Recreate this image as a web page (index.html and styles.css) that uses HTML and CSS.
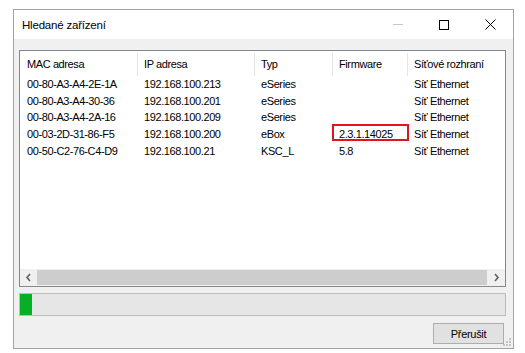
FILE: index.html
```html
<!DOCTYPE html>
<html lang="cs">
<head>
  <meta charset="UTF-8">
  <title>Hledané zařízení</title>
  <link rel="stylesheet" href="styles.css">
</head>
<body>
  <div class="window">
    <!-- Title bar -->
    <div class="titlebar">
      <span class="title">Hledané zařízení</span>
      <div class="controls">
        <span class="ctl ctl-min"><i class="min-line"></i></span>
        <span class="ctl ctl-max"><i class="max-box"></i></span>
        <span class="ctl ctl-close">
          <svg width="11" height="11" viewBox="0 0 11 11"><path d="M0.5 0.5 L10.5 10.5 M10.5 0.5 L0.5 10.5" stroke="#000" stroke-width="1" fill="none"/></svg>
        </span>
      </div>
    </div>

    <div class="content">
      <!-- Device list -->
      <div class="list">
        <div class="row head">
          <span>MAC adresa</span>
          <span>IP adresa</span>
          <span>Typ</span>
          <span>Firmware</span>
          <span>Síťové rozhraní</span>
        </div>
        <div class="row">
          <span>00-80-A3-A4-2E-1A</span><span>192.168.100.213</span><span>eSeries</span><span></span><span>Síť Ethernet</span>
        </div>
        <div class="row">
          <span>00-80-A3-A4-30-36</span><span>192.168.100.201</span><span>eSeries</span><span></span><span>Síť Ethernet</span>
        </div>
        <div class="row">
          <span>00-80-A3-A4-2A-16</span><span>192.168.100.209</span><span>eSeries</span><span></span><span>Síť Ethernet</span>
        </div>
        <div class="row">
          <span>00-03-2D-31-86-F5</span><span>192.168.100.200</span><span>eBox</span><span class="marked">2.3.1.14025</span><span>Síť Ethernet</span>
        </div>
        <div class="row">
          <span>00-50-C2-76-C4-D9</span><span>192.168.100.21</span><span>KSC_L</span><span>5.8</span><span>Síť Ethernet</span>
        </div>

        <div class="hscroll">
          <span class="arrow">
            <svg width="7" height="9" viewBox="0 0 7 9"><path d="M5 1 L2 4.5 L5 8" stroke="#606060" stroke-width="1.6" fill="none"/></svg>
          </span>
          <span class="thumb"></span>
          <span class="arrow">
            <svg width="7" height="9" viewBox="0 0 7 9"><path d="M2 1 L5 4.5 L2 8" stroke="#606060" stroke-width="1.6" fill="none"/></svg>
          </span>
        </div>
      </div>

      <!-- Progress -->
      <div class="progress">
        <div class="progress-fill" style="width: 12px"></div>
      </div>

      <div class="buttons">
        <button class="btn">Přerušit</button>
      </div>
    </div>

    <svg class="grip" width="8" height="8" viewBox="0 0 8 8">
      <rect x="6" y="0" width="2" height="2" fill="#c4c4c4"/>
      <rect x="3" y="3" width="2" height="2" fill="#c4c4c4"/>
      <rect x="6" y="3" width="2" height="2" fill="#c4c4c4"/>
      <rect x="0" y="6" width="2" height="2" fill="#c4c4c4"/>
      <rect x="3" y="6" width="2" height="2" fill="#c4c4c4"/>
      <rect x="6" y="6" width="2" height="2" fill="#c4c4c4"/>
    </svg>
  </div>
</body>
</html>
```

FILE: styles.css
```css
/* Basic Styles */
body {
  margin: 0;
  padding: 0;
  background-color: #fff;
  font-family: "Liberation Sans", Arial, sans-serif;
  color: #000;
}

.window {
  position: relative;
  box-sizing: border-box;
  width: 501px;
  height: 340px;
  margin: 9px 0 0 13px;
  border: 1px solid #a3a3a3;
  background-color: #f0f0f0;
  display: flex;
  flex-direction: column;
}

/* Title bar */
.titlebar {
  height: 29px;
  background-color: #fff;
  display: flex;
  align-items: center;
  justify-content: space-between;
}

.title {
  padding-left: 8px;
  padding-top: 1px;
  font-size: 11.5px;
  letter-spacing: -0.2px;
}

.controls {
  display: flex;
  height: 100%;
}

.ctl {
  width: 46px;
  height: 100%;
  display: flex;
  align-items: center;
  justify-content: center;
}

.ctl-min {
  padding-left: 4px;
}

.min-line {
  display: block;
  width: 10px;
  height: 1px;
  background-color: #c6c6c6;
}

.max-box {
  display: block;
  width: 8px;
  height: 8px;
  border: 1px solid #000;
}

/* Content */
.content {
  flex: 1;
  padding: 11px 7px 0 5px;
  display: flex;
  flex-direction: column;
}

.list {
  box-sizing: border-box;
  height: 237px;
  border: 1px solid #828790;
  background-color: #fff;
  display: flex;
  flex-direction: column;
  font-size: 11px;
  letter-spacing: -0.4px;
}

.row {
  display: grid;
  grid-template-columns: 117px 117px 78px 75px 1fr;
  height: 16.7px;
  line-height: 16.7px;
  white-space: nowrap;
}

.row span {
  padding-left: 7px;
  position: relative;
}

.row.head {
  height: 25px;
  line-height: 23px;
  padding-top: 2px;
  box-sizing: border-box;
}

.row.head span + span {
  border-left: 1px solid #e5e5e5;
  padding-left: 6px;
}

/* highlighted firmware */
.marked::after {
  content: "";
  position: absolute;
  left: 0;
  top: -2px;
  width: 73px;
  height: 13px;
  border: 2px solid #e0141e;
}

/* Scrollbar */
.hscroll {
  margin-top: auto;
  height: 17px;
  background-color: #f0f0f0;
  display: grid;
  grid-template-columns: 17px 1fr 18px;
}

.arrow {
  display: flex;
  align-items: center;
  justify-content: center;
}

.thumb {
  margin: 1px 0;
  background-color: #cdcdcd;
}

/* Progress */
.progress {
  box-sizing: border-box;
  margin-top: 6px;
  height: 23px;
  border: 1px solid #bcbcbc;
  background-color: #e6e6e6;
}

.progress-fill {
  height: 100%;
  background-color: #06b025;
}

.buttons {
  margin-top: 7px;
  display: flex;
  justify-content: flex-end;
  padding-right: 2px;
}

.btn {
  box-sizing: border-box;
  width: 71px;
  height: 21px;
  border: 1px solid #adadad;
  background-color: #e1e1e1;
  font-family: "Liberation Sans", Arial, sans-serif;
  font-size: 11px;
  letter-spacing: -0.3px;
  color: #000;
  padding: 0;
}

.grip {
  position: absolute;
  right: 2px;
  bottom: 2px;
}
```
